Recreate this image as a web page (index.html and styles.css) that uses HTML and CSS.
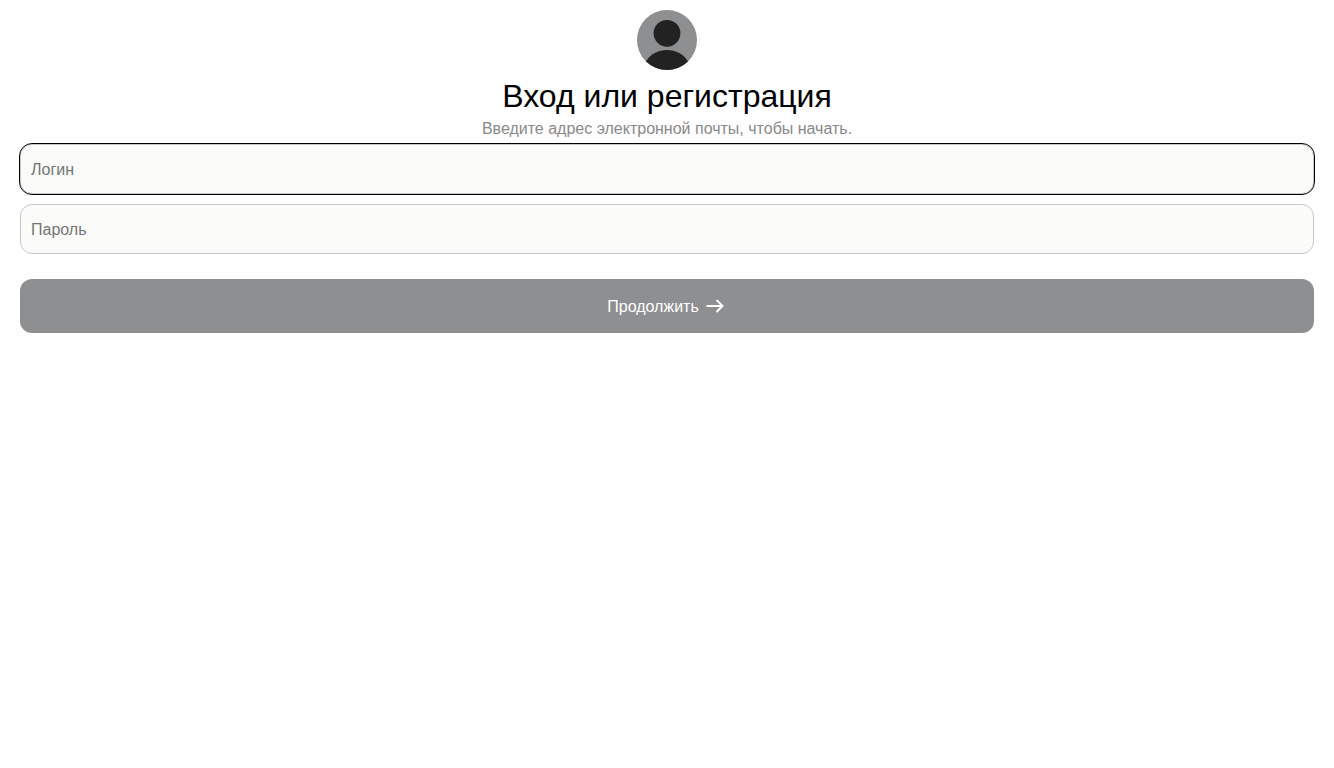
FILE: index.html
```html
<!DOCTYPE html>
<html lang="ru">
<head>
<meta charset="utf-8">
<meta name="viewport" content="width=device-width, initial-scale=1">
<title>Вход или регистрация</title>
<link rel="stylesheet" href="styles.css">
</head>
<body>
<main class="auth">
  <header class="auth-header">
    <svg class="avatar" viewBox="0 0 60 60" aria-hidden="true">
      <circle cx="30" cy="30" r="30" fill="#8e8f91"/>
      <circle cx="30" cy="23.3" r="13.4" fill="#222"/>
      <path d="M9 51.400C13.500 44 21 40 30 40s16.500 4 21 11.400A30 30 0 0 1 9 51.400Z" fill="#222"/>
    </svg>
    <h1 class="title">Вход или регистрация</h1>
    <p class="subtitle">Введите адрес электронной почты, чтобы начать.</p>
  </header>
  <form class="auth-form">
    <input class="field" type="text" name="login" placeholder="Логин" aria-label="Логин" autofocus>
    <input class="field" type="password" name="password" placeholder="Пароль" aria-label="Пароль">
    <button class="submit" type="submit">
      <span class="submit-label">Продолжить</span>
      <svg class="arrow" viewBox="0 0 24 24" fill="none" stroke="#fff" stroke-width="2" aria-hidden="true">
        <path d="M3.500 12H19.500M13.500 6 19.500 12l-6 6"/>
      </svg>
    </button>
  </form>
</main>
</body>
</html>
```
FILE: styles.css
```css
* {
  box-sizing: border-box;
}

body {
  margin: 0;
  background: #fff;
  color: #000;
  font-family: "Liberation Sans", Arial, sans-serif;
  font-size: 16px;
}

.auth {
  padding: 10px 20px;
}

.auth-header {
  display: flex;
  flex-direction: column;
  align-items: center;
  text-align: center;
}

.avatar {
  width: 60px;
  height: 60px;
}

.title {
  margin: 8px 0 5px;
  font-size: 32px;
  font-weight: 400;
  line-height: 36px;
}

.subtitle {
  margin: 0 0 5px;
  color: #8a8a8a;
  line-height: 20px;
}

.auth-form {
  display: flex;
  flex-direction: column;
  gap: 10px;
}

.field {
  width: 100%;
  height: 50px;
  padding: 2px 10px 0;
  border: 1px solid #c8c8c8;
  border-radius: 12px;
  background: #fbfbf9;
  color: #000;
  font: inherit;
}

.field::placeholder {
  color: #757575;
}

.field:first-child {
  outline: 1px solid #000;
}

.submit {
  display: flex;
  align-items: center;
  justify-content: center;
  gap: 4px;
  height: 54px;
  margin-top: 15px;
  border: 0;
  border-radius: 12px;
  background: #8e8f91;
  color: #fff;
  font: inherit;
}

.submit-label {
  padding-top: 2px;
}

.arrow {
  width: 24px;
  height: 24px;
}
```
